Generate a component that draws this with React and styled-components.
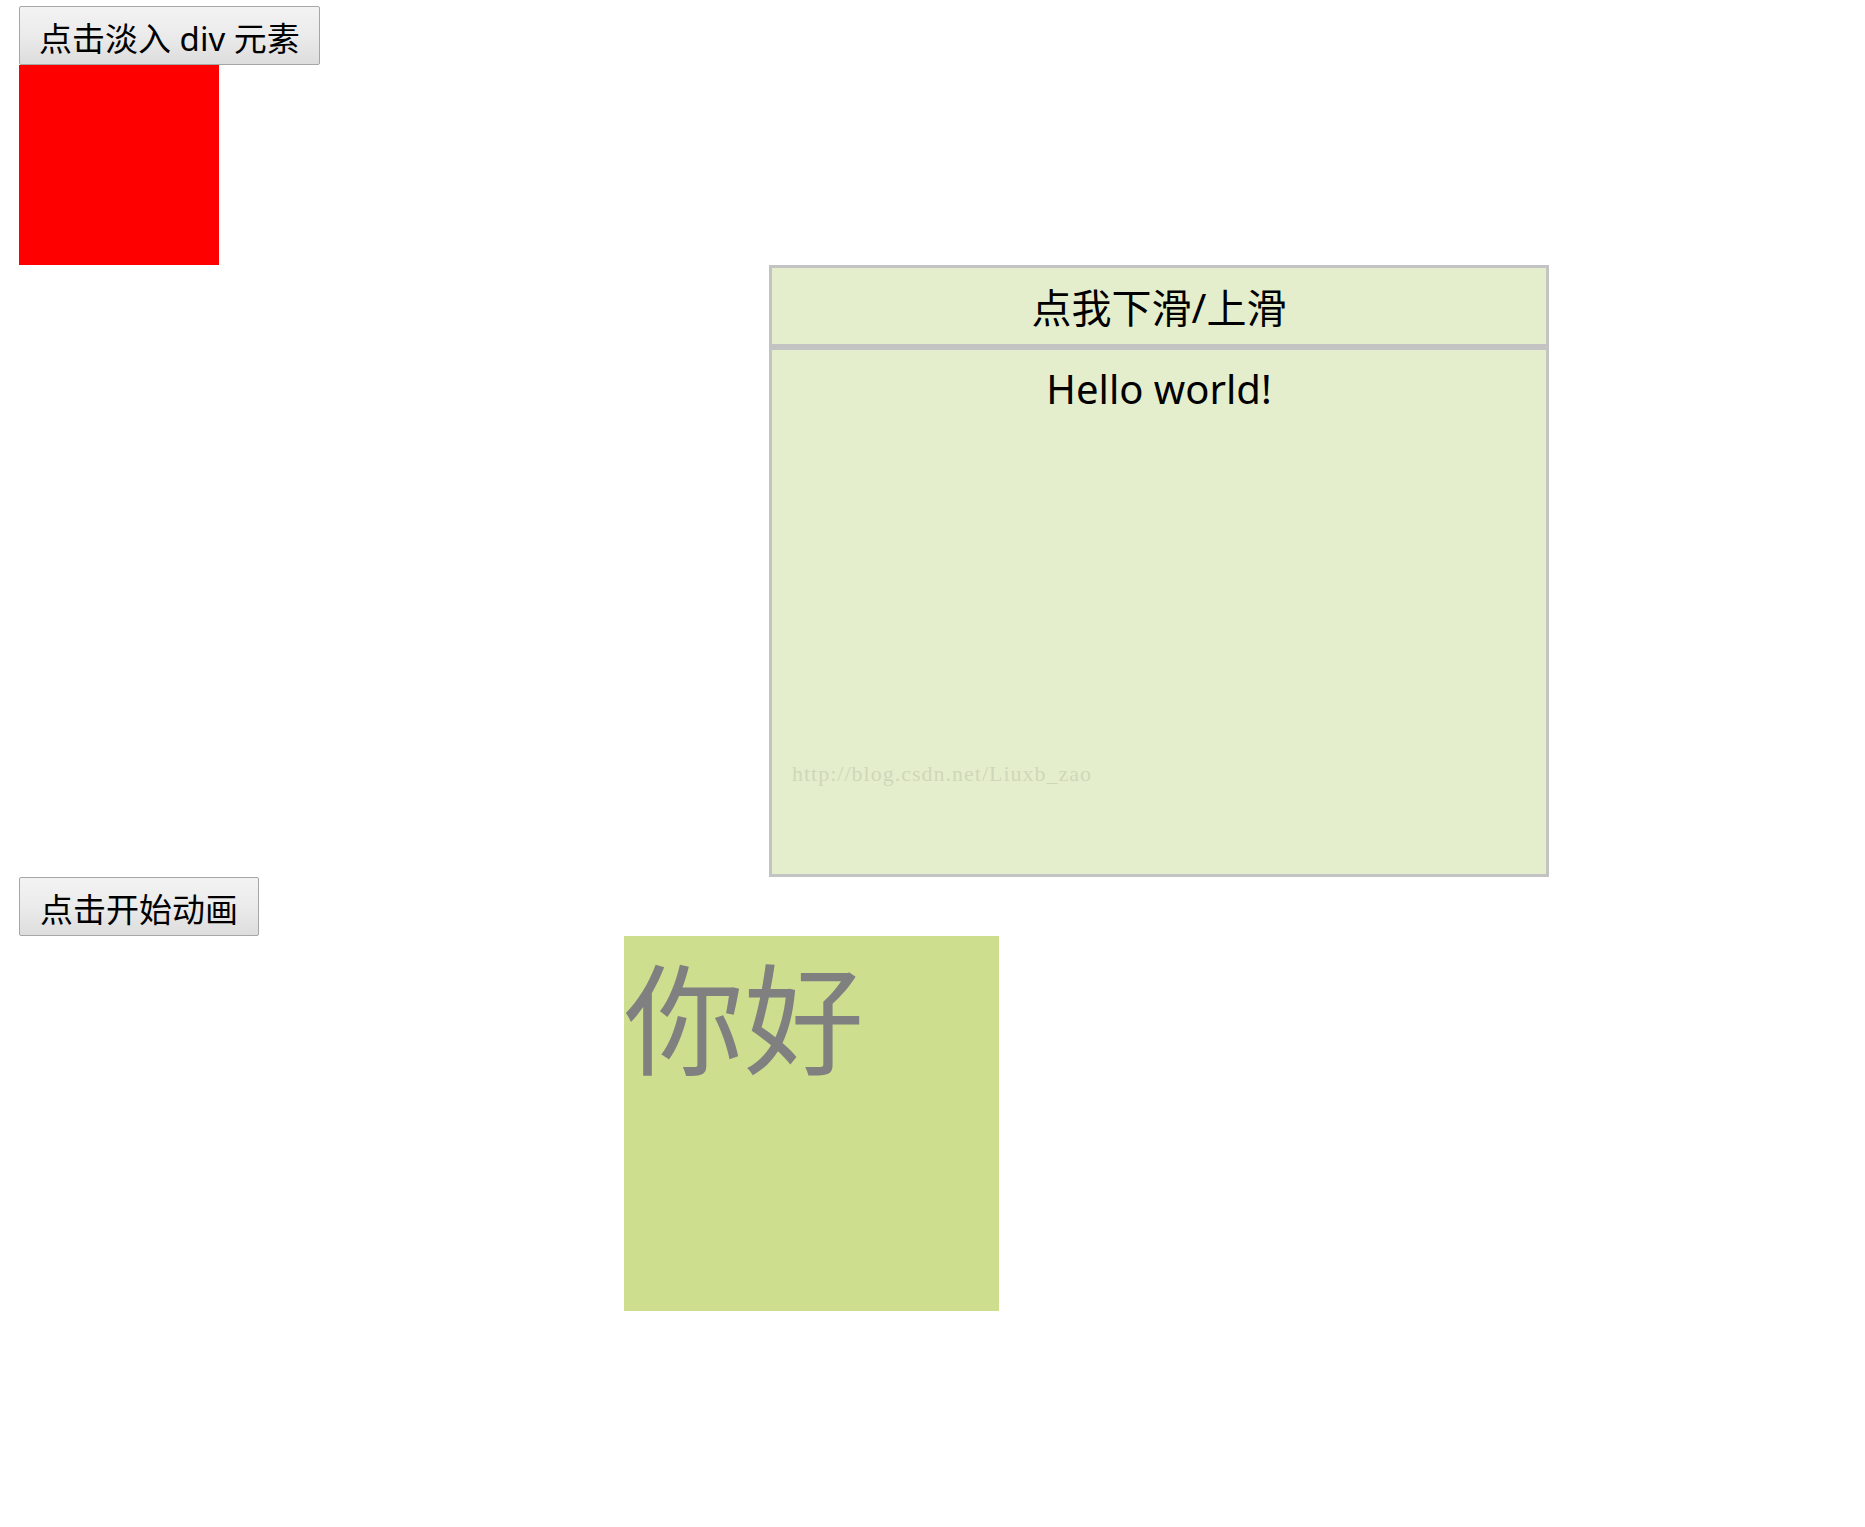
import React from "react";
import styled, { createGlobalStyle } from "styled-components";

const GlobalStyle = createGlobalStyle`
  html, body {
    margin: 0;
    padding: 0;
    background: #ffffff;
  }
  body {
    font-family: "Noto Sans", "Noto Sans CJK SC", sans-serif;
    color: #000000;
  }
`;

const Page = styled.div`
  display: flex;
  flex-direction: column;
  align-items: flex-start;
  padding: 6px 19px;
`;

const Button = styled.button`
  box-sizing: border-box;
  height: 59px;
  margin: 0;
  padding: 2px ${(p) => p.$pad || 20}px 0;
  display: flex;
  align-items: center;
  justify-content: center;
  border: 1px solid #a6a6a6;
  border-radius: 2px;
  background: linear-gradient(to bottom, #f3f3f3 0%, #ebebeb 50%, #dddddd 100%);
  font-family: "Noto Sans", "Noto Sans CJK SC", sans-serif;
  font-size: 33px;
  color: #000000;
  white-space: nowrap;
  cursor: pointer;
`;

const Square = styled.div`
  width: ${(p) => p.$size}px;
  height: ${(p) => p.$size}px;
  margin-left: ${(p) => p.$offset || 0}px;
  background: ${(p) => p.$bg};
`;

const Panel = styled.div`
  box-sizing: border-box;
  width: 780px;
  margin-left: 750px;
  display: flex;
  flex-direction: column;
`;

const PanelHeader = styled.div`
  box-sizing: border-box;
  height: 82px;
  border: 3px solid #c3c3c3;
  background: #e5eecc;
  padding-top: 4px;
  text-align: center;
  font-size: 40px;
  line-height: 72px;
  cursor: pointer;
`;

const PanelBody = styled.div`
  box-sizing: border-box;
  position: relative;
  height: 530px;
  border: 3px solid #c3c3c3;
  background: #e5eecc;
  padding-top: 15px;
  text-align: center;
`;

const BodyText = styled.p`
  margin: 0;
  font-family: "Noto Sans", "Noto Sans CJK SC", sans-serif;
  font-size: 40px;
  line-height: 48px;
`;

const Watermark = styled.span`
  position: absolute;
  left: 20px;
  top: 413px;
  font-family: "Liberation Serif", serif;
  font-size: 22px;
  line-height: 22px;
  letter-spacing: 1px;
  color: #cfd7ba;
  white-space: nowrap;
`;

const Greeting = styled.span`
  display: block;
  font-family: "Noto Sans CJK SC", sans-serif;
  font-size: 120px;
  line-height: 156px;
  color: #808080;
`;

export default function App() {
  return (
    <>
      <GlobalStyle />
      <Page>
        <Button $pad={19}>点击淡入 div 元素</Button>
        <Square $size={200} $bg="#ff0000" />
        <Panel>
          <PanelHeader>点我下滑/上滑</PanelHeader>
          <PanelBody>
            <BodyText>Hello world!</BodyText>
            <Watermark>http://blog.csdn.net/Liuxb_zao</Watermark>
          </PanelBody>
        </Panel>
        <Button>点击开始动画</Button>
        <Square $size={375} $offset={605} $bg="#cddf8f">
          <Greeting>你好</Greeting>
        </Square>
      </Page>
    </>
  );
}
